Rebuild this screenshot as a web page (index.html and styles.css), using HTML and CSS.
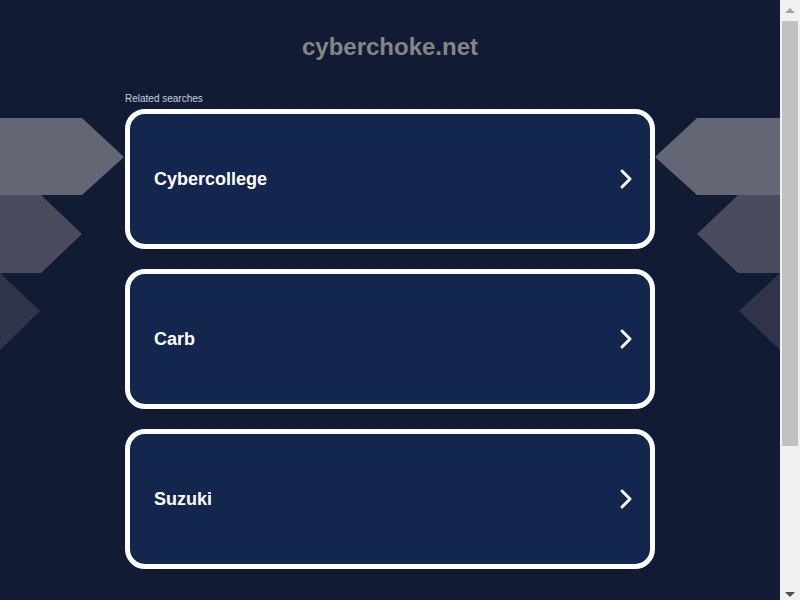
FILE: index.html
```html
<!DOCTYPE html>
<html lang="en">
<head>
<meta charset="utf-8">
<title>cyberchoke.net</title>
<link rel="stylesheet" href="styles.css">
</head>
<body>
<div class="viewport">
  <div class="deco" aria-hidden="true">
    <svg class="deco-left" width="130" height="360" viewBox="0 0 130 360">
      <polygon points="0,118 82,118 124,157 82,195 0,195" fill="#636674"/>
      <polygon points="0,195 41,195 82,234 41,273 0,273" fill="#4a4c5d"/>
      <polygon points="0,273 40,311 0,350" fill="#30344a"/>
    </svg>
    <svg class="deco-right" width="130" height="360" viewBox="0 0 130 360">
      <polygon points="130,118 47,118 5,157 47,195 130,195" fill="#636674"/>
      <polygon points="130,195 88,195 47,234 88,273 130,273" fill="#4a4c5d"/>
      <polygon points="130,273 89,311 130,350" fill="#30344a"/>
    </svg>
  </div>
  <main class="page">
    <h1 class="domain">cyberchoke.net</h1>
    <section class="related">
      <p class="related-title">Related searches</p>
      <a class="card" href="#"><span class="card-label">Cybercollege</span><svg class="chev" width="16" height="22" viewBox="0 0 16 22"><path d="M4 3 L12 11 L4 19" fill="none" stroke="#fff" stroke-width="3" stroke-linecap="round" stroke-linejoin="round"/></svg></a>
      <a class="card" href="#"><span class="card-label">Carb</span><svg class="chev" width="16" height="22" viewBox="0 0 16 22"><path d="M4 3 L12 11 L4 19" fill="none" stroke="#fff" stroke-width="3" stroke-linecap="round" stroke-linejoin="round"/></svg></a>
      <a class="card" href="#"><span class="card-label">Suzuki</span><svg class="chev" width="16" height="22" viewBox="0 0 16 22"><path d="M4 3 L12 11 L4 19" fill="none" stroke="#fff" stroke-width="3" stroke-linecap="round" stroke-linejoin="round"/></svg></a>
    </section>
  </main>
</div>
<div class="scrollbar" aria-hidden="true">
  <div class="sb-btn"><span class="sb-up"></span></div>
  <div class="sb-track"><div class="sb-thumb"></div></div>
  <div class="sb-btn"><span class="sb-down"></span></div>
</div>
</body>
</html>
```

FILE: styles.css
```css
html, body {
  margin: 0;
  padding: 0;
  height: 100%;
  overflow: hidden;
}
body {
  display: flex;
  background: #111b34;
  font-family: "Liberation Sans", Arial, sans-serif;
}
.viewport {
  position: relative;
  flex: 1;
  height: 600px;
  overflow: hidden;
}
.deco {
  position: absolute;
  top: 0;
  left: 0;
  right: 0;
  height: 360px;
  pointer-events: none;
}
.deco-left {
  position: absolute;
  left: 0;
  top: 0;
}
.deco-right {
  position: absolute;
  right: 0;
  top: 0;
}
.page {
  position: relative;
  width: 530px;
  margin: 0 auto;
  padding-top: 33px;
}
.domain {
  margin: 0;
  text-align: center;
  font-size: 24px;
  line-height: 28px;
  font-weight: bold;
  color: #858585;
}
.related {
  margin-top: 32px;
  display: flex;
  flex-direction: column;
  gap: 20px;
}
.related-title {
  margin: 0 0 -16px 0;
  font-size: 10px;
  line-height: 12px;
  color: #c9d1e0;
}
.card {
  box-sizing: border-box;
  height: 140px;
  display: flex;
  align-items: center;
  justify-content: space-between;
  padding: 0 16px 0 24px;
  background: #12264e;
  border: 5px solid #fff;
  border-radius: 20px;
  text-decoration: none;
}
.card-label {
  color: #fff;
  font-size: 18px;
  font-weight: bold;
}
.chev {
  display: block;
}
.scrollbar {
  width: 20px;
  height: 600px;
  background: #f1f1f1;
  display: flex;
  flex-direction: column;
  flex-shrink: 0;
}
.sb-btn {
  height: 17px;
  display: flex;
  align-items: center;
  justify-content: center;
}
.sb-up {
  width: 0;
  height: 0;
  border-left: 5px solid transparent;
  border-right: 5px solid transparent;
  border-bottom: 5px solid #a3a3a3;
  margin-top: 4px;
}
.sb-down {
  width: 0;
  height: 0;
  border-left: 5px solid transparent;
  border-right: 5px solid transparent;
  border-top: 5px solid #505050;
  margin-top: 5px;
}
.sb-track {
  flex: 1;
  padding: 4px 2px 0 2px;
}
.sb-thumb {
  height: 425px;
  background: #c1c1c1;
}
```
